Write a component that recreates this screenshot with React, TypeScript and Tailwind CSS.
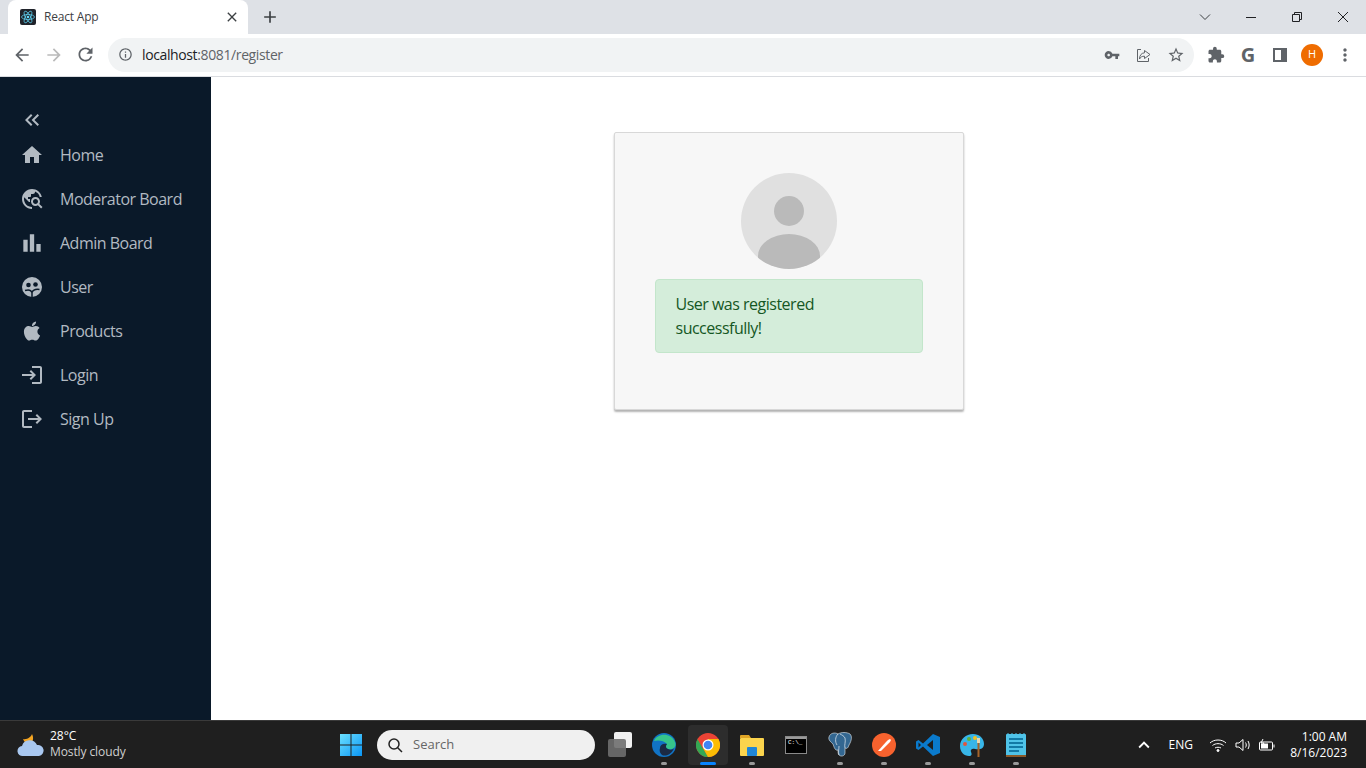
import type { ReactNode } from "react";
import {
  MdHome,
  MdTravelExplore,
  MdBarChart,
  MdLogin,
  MdLogout,
  MdKeyboardDoubleArrowLeft,
  MdVpnKey,
  MdStarBorder,
  MdExtension,
  MdArrowBack,
  MdArrowForward,
  MdRefresh,
  MdInfoOutline,
  MdMoreVert,
  MdClose,
  MdAdd,
  MdKeyboardArrowUp,
} from "react-icons/md";
import { FaApple } from "react-icons/fa";

const font = "font-['Open_Sans',sans-serif]";

function UserIcon() {
  return (
    <svg width="22" height="22" viewBox="0 0 22 22">
      <circle cx="11" cy="11" r="10" fill="currentColor" />
      <circle cx="7.500" cy="9" r="2.300" fill="#0a1929" />
      <circle cx="14.500" cy="8.500" r="2.300" fill="#0a1929" />
      <path d="M4 14.500c3-1 6-.5 7 2v4.500M11 16.500c1-2.500 4-3.500 7.500-3" fill="none" stroke="#0a1929" strokeWidth="1.500" />
    </svg>
  );
}

const navItems: { label: string; icon: ReactNode }[] = [
  { label: "Home", icon: <MdHome size={24} /> },
  { label: "Moderator Board", icon: <MdTravelExplore size={24} /> },
  { label: "Admin Board", icon: <MdBarChart size={26} /> },
  { label: "User", icon: <UserIcon /> },
  { label: "Products", icon: <FaApple size={22} /> },
  { label: "Login", icon: <MdLogin size={24} /> },
  { label: "Sign Up", icon: <MdLogout size={24} /> },
];

function BrowserChrome() {
  return (
    <div className={`shrink-0 ${font}`}>
      <div className="flex h-[34px] bg-[#dee1e6] pl-2">
        <div className="flex w-[240px] items-center rounded-t-lg bg-white pl-3 pr-2">
          <svg width="16" height="16" viewBox="0 0 16 16">
            <rect width="16" height="16" rx="2" fill="#20232a" />
            <g fill="none" stroke="#61dafb" strokeWidth="0.7">
              <ellipse cx="8" cy="8" rx="6.500" ry="2.500" />
              <ellipse cx="8" cy="8" rx="6.500" ry="2.500" transform="rotate(60 8 8)" />
              <ellipse cx="8" cy="8" rx="6.500" ry="2.500" transform="rotate(120 8 8)" />
            </g>
            <circle cx="8" cy="8" r="1.300" fill="#61dafb" />
          </svg>
          <span className="ml-2 text-[12px] tracking-[-0.2px] text-[#3c4043]">React App</span>
          <MdClose size={16} className="ml-auto text-[#3c4043]" />
        </div>
        <MdAdd size={20} className="ml-3 mt-[7px] text-[#3c4043]" />
        <div className="ml-auto flex items-center text-[#3c4043]">
          <svg width="12" height="8" viewBox="0 0 12 8" className="mr-[35px]">
            <path d="M1 1.500 6 6.500 11 1.500" fill="none" stroke="currentColor" />
          </svg>
          <div className="mr-[35px] h-px w-[10px] bg-[#202124]" />
          <svg width="12" height="12" viewBox="0 0 12 12" className="mr-[34px]">
            <path d="M1.500 3.500h7v7h-7zM3.500 3.500V1.500h7v7h-2" fill="none" stroke="#202124" />
          </svg>
          <svg width="12" height="12" viewBox="0 0 12 12" className="mr-[17px]">
            <path d="M1 1 11 11M11 1 1 11" stroke="#202124" />
          </svg>
        </div>
      </div>
      <div className="flex h-[43px] items-center border-b border-[#dadce0] bg-white pb-px">
        <MdArrowBack size={20} className="ml-3 text-[#5f6368]" />
        <MdArrowForward size={20} className="ml-3 text-[#bababa]" />
        <MdRefresh size={21} className="ml-[11px] text-[#5f6368]" />
        <div className="ml-[12px] flex h-[34px] w-[1086px] items-center rounded-full bg-[#f1f3f4] pl-[10px] pr-[9px]">
          <MdInfoOutline size={15} className="text-[#5f6368]" />
          <span className="ml-[9px] text-[14px] tracking-[-0.38px] text-[#202124]">
            localhost<span className="text-[#5f6368]">:8081/register</span>
          </span>
          <MdVpnKey size={16} className="ml-auto text-[#5f6368]" />
          <svg width="16" height="16" viewBox="0 0 16 16" className="ml-[16px] text-[#5f6368]" fill="none" stroke="currentColor">
            <path d="M8.500 3.500 14 7.500l-5.500 4V9.200C6 9.200 4.500 10 3.500 12c0-3.500 1.800-6 5-6.200Z" />
            <path d="M5 2.500H1.500v12h11V11" />
          </svg>
          <MdStarBorder size={18} className="ml-[15px] text-[#5f6368]" />
        </div>
        <MdExtension size={18} className="ml-[13px] text-[#5f6368]" />
        <span className="ml-[13px] w-[20px] text-center font-bold text-[20px] leading-none text-[#5f6368]">G</span>
        <div className="ml-[15px] flex h-[14px] w-[14px] justify-end border-2 border-[#5f6368] bg-white">
          <div className="w-[4px] bg-[#5f6368]" />
        </div>
        <div className="ml-[14px] flex h-[22px] w-[22px] items-center justify-center rounded-full bg-[#ef6c00] text-[11px] text-white">
          H
        </div>
        <MdMoreVert size={20} className="ml-[12px] text-[#5f6368]" />
      </div>
    </div>
  );
}

function Sidebar() {
  return (
    <aside className={`flex w-[211px] shrink-0 flex-col bg-[#0a1929] pt-[31px] text-[#b2bac2] ${font}`}>
      <MdKeyboardDoubleArrowLeft size={24} className="ml-5 mb-[1px]" />
      {navItems.map((item) => (
        <div key={item.label} className="flex h-[44px] items-center">
          <span className="flex w-[60px] justify-center pl-[4px]">{item.icon}</span>
          <span className="text-[16px] tracking-[-0.5px]">{item.label}</span>
        </div>
      ))}
    </aside>
  );
}

function RegisterCard() {
  return (
    <main className={`flex-1 bg-white ${font}`}>
      <div className="mx-auto mt-[55px] w-[350px] rounded-[2px] border border-[#d8d8d8] bg-[#f7f7f7] p-10 shadow-[0_2px_2px_rgba(0,0,0,0.3)]">
        <svg width="96" height="96" viewBox="0 0 96 96" className="mx-auto mb-[10px] block">
          <defs>
            <clipPath id="avatar">
              <circle cx="48" cy="48" r="48" />
            </clipPath>
          </defs>
          <circle cx="48" cy="48" r="48" fill="#e0e0e0" />
          <circle cx="48" cy="38" r="15" fill="#bababa" />
          <path d="M17 83a31 22 0 0 1 62 0V96H17Z" fill="#bababa" clipPath="url(#avatar)" />
        </svg>
        <div className="mb-4 rounded-[4px] border border-[#c3e6cb] bg-[#d4edda] px-5 py-3 text-[16px] leading-6 tracking-[-0.5px] text-[#155724]">
          User was registered successfully!
        </div>
      </div>
    </main>
  );
}

function TaskIcon({ children, active, dot = true }: { children: ReactNode; active?: boolean; dot?: boolean }) {
  return (
    <div className="relative flex h-[40px] w-[44px] items-center justify-center">
      {active && <div className="absolute inset-y-0 left-[2px] right-[2px] rounded bg-[#2d2d2d]" />}
      <div className="relative flex">{children}</div>
      {dot && !active && <div className="absolute bottom-[0px] h-[3px] w-[6px] rounded-full bg-[#9a9a9a]" />}
      {active && <div className="absolute bottom-[0px] h-[3px] w-[16px] rounded-full bg-[#0a84ff]" />}
    </div>
  );
}

function Taskbar() {
  return (
    <footer className={`flex h-[48px] shrink-0 items-center border-t border-[#3a3a3a] bg-[#1f1f1f] text-white ${font}`}>
      <div className="flex w-[339px] items-center pl-[17px]">
        <svg width="27" height="24" viewBox="0 0 27 24">
          <path d="M15 1c-1 3-5 6-9 5 1 3 4 5 8 5 2-3 3-6 1-10Z" fill="#f5a623" />
          <path d="M6 23a5 5 0 0 1-1-10 8 8 0 0 1 15-1 5.500 5.500 0 0 1 2 11Z" fill="#a9c8f0" />
        </svg>
        <div className="ml-[6px] -mt-[1px] text-[12px] leading-[16px]">
          <div>28°C</div>
          <div className="text-[#d0d0d0] tracking-[-0.1px]">Mostly cloudy</div>
        </div>
      </div>
      <svg width="24" height="24" viewBox="0 0 24 24">
        <defs>
          <linearGradient id="win" x1="0" y1="0" x2="1" y2="1">
            <stop offset="0" stopColor="#6ce0ff" />
            <stop offset="1" stopColor="#0a96f5" />
          </linearGradient>
        </defs>
        <path d="M1 1h10.500v10.500H1zM12.500 1H23v10.500H12.500zM1 12.500h10.500V23H1zM12.500 12.500H23V23H12.500z" fill="url(#win)" />
      </svg>
      <div className="ml-[14px] flex h-[30px] w-[218px] items-center rounded-full bg-[#f0f0f0] pl-[10px] text-[13px] text-[#666]">
        <svg width="16" height="16" viewBox="0 0 16 16" fill="none" stroke="#222" strokeWidth="1.500">
          <circle cx="7" cy="7" r="5" />
          <path d="M10.500 10.500 15 15" />
        </svg>
        <span className="ml-[10px]">Search</span>
      </div>
      <div className="ml-[3px] flex items-center">
        <TaskIcon dot={false}>
          <div className="relative h-[25px] w-[24px]">
            <div className="absolute right-0 top-0 h-[16px] w-[18px] rounded-[2px] bg-[#f0f0f0]" />
            <div className="absolute bottom-0 left-0 h-[18px] w-[18px] rounded-[2px] bg-[#6e6e6e]/90" />
          </div>
        </TaskIcon>
        <TaskIcon>
          <svg width="24" height="24" viewBox="0 0 24 24">
            <circle cx="12" cy="12" r="12" fill="#1173c4" />
            <path d="M2 8C5 0 19-1 23 9c2 6-3 8-7 7-3-1-2-4-1-5-3-4-10-4-13-3Z" fill="#36c58b" />
            <path d="M8 15c0-3 3-5 7-4-1 1-2 4 1 5 2 1 5 1 6-1-2 6-8 9-12 7-2-2-3-4-2-7Z" fill="#1b2a44" />
          </svg>
        </TaskIcon>
        <TaskIcon active>
          <svg width="24" height="24" viewBox="0 0 24 24">
            <circle cx="12" cy="12" r="12" fill="#ea4335" />
            <path d="M12 24A12 12 0 0 1 1.600 6l5.200 9 5.200 9Z" fill="#34a853" />
            <path d="M12 24a12 12 0 0 0 10.400-18H12l-5 9Z" fill="#fbbc04" />
            <path d="M1.600 6 6.800 15 12 6Z" fill="#ea4335" />
            <circle cx="12" cy="12" r="5.500" fill="#fff" />
            <circle cx="12" cy="12" r="4.300" fill="#4285f4" />
          </svg>
        </TaskIcon>
        <TaskIcon>
          <svg width="24" height="22" viewBox="0 0 24 22">
            <path d="M0 2a1 1 0 0 1 1-1h8l2 3H0Z" fill="#e0a526" />
            <rect y="4" width="24" height="18" rx="1" fill="#fbd44d" />
            <rect x="7" y="13" width="10" height="9" rx="1" fill="#1f86d6" />
          </svg>
        </TaskIcon>
        <TaskIcon dot={false}>
          <div className="h-[18px] w-[22px] overflow-hidden border border-[#8a8a8a] bg-black font-['Liberation_Mono',monospace] text-[6px] leading-[8px] text-white">
            <div className="h-[2px] bg-[#9a9a9a]" />
            <div className="pl-[2px]">C:\_</div>
          </div>
        </TaskIcon>
        <TaskIcon>
          <svg width="26" height="26" viewBox="0 0 26 26">
            <path d="M2 5C3 1 8 0 11 2c3-2 9-2 12 0 2 2 2 6-1 11-1 3-2 4-4 3v5c0 3-4 4-6 2-1-1-1-3-1-5-3 1-4-3-5-6-2-2-5-4-4-7Z" fill="#336791" stroke="#e8eef3" strokeWidth="0.600" />
            <path d="M11 2c-3 3-3 8-1 11M18 16c-1-3 1-6 0-10-1-2-3-3-5-4M12 23c-1-3 0-6 0-9" fill="none" stroke="#e8eef3" strokeWidth="0.700" />
          </svg>
        </TaskIcon>
        <TaskIcon>
          <svg width="24" height="24" viewBox="0 0 24 24">
            <circle cx="12" cy="12" r="12" fill="#f7622e" />
            <path d="M6 18 14 9l2-2 2-1 1 1-1 2-2 2-7 7Z" fill="#fff" />
          </svg>
        </TaskIcon>
        <TaskIcon>
          <svg width="24" height="24" viewBox="0 0 24 24">
            <path d="M17 1 7 10.500 2.500 7 0 8.500v7L2.500 17 7 13.500 17 23l7-3V4Z" fill="#0a7acc" />
            <path d="M17 7v10l-6-5Z" fill="#1f1f1f" />
            <path d="M2.500 9.500v5L5 12Z" fill="#1f1f1f" />
          </svg>
        </TaskIcon>
        <TaskIcon>
          <svg width="24" height="24" viewBox="0 0 24 24">
            <path d="M13 1C6 1 0 6 0 13c0 6 4 10 9 10 3 0 3-2 2-4s1-4 4-3c4 1 9 0 9-5C24 5 19 1 13 1Z" fill="#38b6e8" />
            <circle cx="5" cy="11" r="2" fill="#e2553d" />
            <circle cx="9" cy="6" r="2" fill="#5fb23a" />
            <circle cx="15" cy="5" r="2" fill="#f4c020" />
            <rect x="17" y="5" width="3" height="5" fill="#e8d8b0" />
            <rect x="17.500" y="10" width="2" height="14" fill="#a5642a" />
          </svg>
        </TaskIcon>
        <TaskIcon>
          <svg width="20" height="24" viewBox="0 0 20 24">
            <rect y="1" width="20" height="23" rx="1" fill="#4fc3e8" />
            <rect y="22" width="20" height="2" fill="#8a5a2a" />
            <path d="M2 1V0M6 1V0M10 1V0M14 1V0M18 1V0" stroke="#4fc3e8" />
            <path d="M3 6h14M3 10h14M3 14h14M3 18h10" stroke="#1279a5" strokeWidth="1.800" />
          </svg>
        </TaskIcon>
      </div>
      <div className="ml-auto flex items-center pr-[19px]">
        <MdKeyboardArrowUp size={22} />
        <span className="ml-[14px] text-[12px]">ENG</span>
        <svg width="18" height="14" viewBox="0 0 18 14" fill="none" stroke="#fff" className="ml-[16px]">
          <path d="M1 5c4-4 12-4 16 0M3.500 7.500c3-2.500 8-2.500 11 0M6 10c1.500-1 4.500-1 6 0" />
          <circle cx="9" cy="12.500" r="1" fill="#fff" />
        </svg>
        <svg width="16" height="14" viewBox="0 0 16 14" fill="none" stroke="#fff" className="ml-[8px]">
          <path d="M1 5h3l4-3.500v11L4 9H1ZM10.500 4.500c1 1.500 1 3.500 0 5M13 3c1.500 2.500 1.500 5.500 0 8" />
        </svg>
        <svg width="18" height="14" viewBox="0 0 18 14" fill="none" stroke="#fff" className="ml-[7px]">
          <rect x="1.500" y="4" width="13" height="8" rx="1" />
          <path d="M16 6.500v3M5 1 3 5h3L4 9" />
          <rect x="3" y="5.500" width="7" height="5" fill="#fff" stroke="none" />
        </svg>
        <div className="ml-[11px] w-[60px] text-right text-[12px] leading-[16px]">
          <div>1:00 AM</div>
          <div>8/16/2023</div>
        </div>
      </div>
    </footer>
  );
}

export default function App() {
  return (
    <div className="flex h-[768px] w-[1366px] flex-col overflow-hidden">
      <BrowserChrome />
      <div className="flex min-h-0 flex-1">
        <Sidebar />
        <RegisterCard />
      </div>
      <Taskbar />
    </div>
  );
}
